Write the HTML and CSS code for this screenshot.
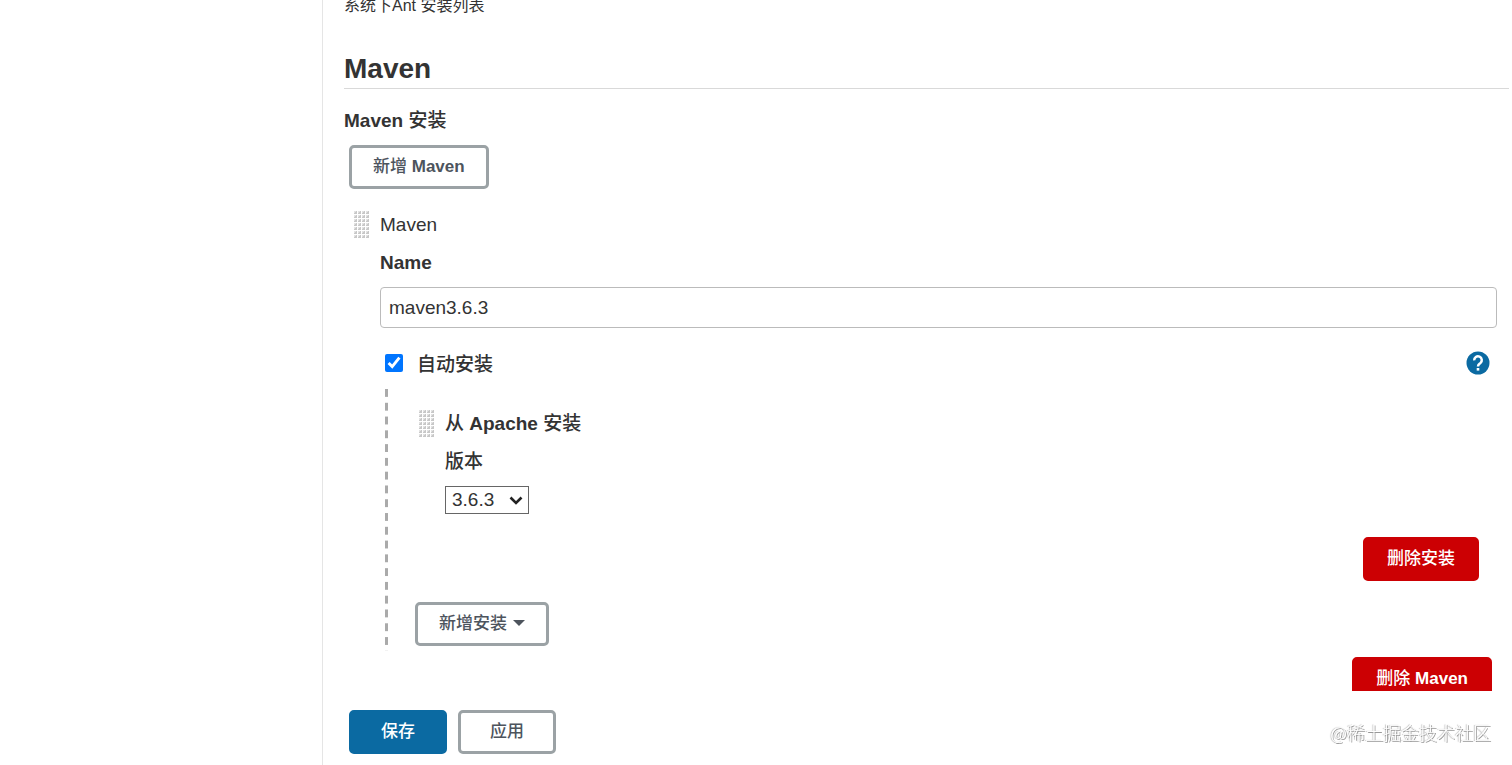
FILE: index.html
```html
<!DOCTYPE html>
<html lang="zh-CN">
<head>
<meta charset="UTF-8">
<title>Maven</title>
<link rel="stylesheet" href="styles.css">
</head>
<body>
<aside class="side-panel"></aside>
<main class="main-panel">
  <form class="config">
    <div class="config-body">
      <p class="description">系统下Ant 安装列表</p>
      <h2 class="section-title">Maven</h2>
      <div class="label">Maven <span class="zh">安装</span></div>
      <div class="button-row">
        <button type="button" class="btn"><span class="zh">新增</span> Maven</button>
      </div>

      <div class="item">
        <div class="handle">
          <svg class="grip" width="16" height="28"><defs><pattern id="dots" width="4" height="4" patternUnits="userSpaceOnUse"><rect width="3" height="3" fill="#e2e2e2"/><path d="M0 2h1V1h1V0h1v3H0z" fill="#c8c8c8"/></pattern></defs><rect width="16" height="28" fill="url(#dots)"/></svg>
        </div>
        <div class="item-body">
          <div class="item-name">Maven</div>
          <label class="label" for="name">Name</label>
          <input type="text" id="name" class="text-input" value="maven3.6.3">
          <div class="check-row">
            <input type="checkbox" id="auto" class="checkbox" checked>
            <label class="check-label zh" for="auto">自动安装</label>
            <a href="#" class="help" aria-label="Help">
              <svg width="24" height="24" viewBox="0 0 24 24"><circle cx="12" cy="12" r="11.5" fill="#0b6aa2"/><path d="M8.200 9.400a3.800 3.800 0 1 1 6.200 2.700c-1.400 1.100-2.400 1.500-2.400 3.300" fill="none" stroke="#fff" stroke-width="2.500"/><rect x="10.700" y="17" width="2.600" height="2.600" fill="#fff"/></svg>
            </a>
          </div>

          <div class="installers">
            <div class="item installer">
              <div class="handle">
                <svg class="grip" width="16" height="28"><rect width="16" height="28" fill="url(#dots)"/></svg>
              </div>
              <div class="item-body">
                <div class="item-name bold"><span class="zh">从</span> Apache <span class="zh">安装</span></div>
                <label class="label zh" for="version">版本</label>
                <div class="select">
                  <select id="version"><option>3.6.3</option></select>
                  <svg class="arrow" width="14" height="9" viewBox="0 0 14 9"><path d="M1.500 1.500 7 7l5.500-5.500" fill="none" stroke="#222" stroke-width="2.600"/></svg>
                </div>
              </div>
            </div>
            <div class="button-row end">
              <button type="button" class="btn danger"><span class="zh">删除安装</span></button>
            </div>
            <div class="add-installer">
              <button type="button" class="btn"><span class="zh">新增安装</span><span class="caret"></span></button>
            </div>
          </div>
          <div class="button-row end">
            <button type="button" class="btn danger"><span class="zh">删除</span> Maven</button>
          </div>
        </div>
      </div>
    </div>

    <div class="bottom-bar">
      <button type="submit" class="btn primary"><span class="zh">保存</span></button>
      <button type="button" class="btn"><span class="zh">应用</span></button>
    </div>
  </form>
</main>
<div class="watermark">@稀土掘金技术社区</div>
</body>
</html>
```
FILE: styles.css
```css
:root {
  --text: #333;
  --border: #bbb;
  --btn-border: #9ba2a5;
  --btn-text: #4d545d;
  --primary: #0b6aa2;
  --danger: #cc0003;
}

* {
  box-sizing: border-box;
  margin: 0;
  padding: 0;
}

body {
  display: flex;
  height: 100vh;
  overflow: hidden;
  font-family: "Liberation Sans", "Noto Sans CJK SC", sans-serif;
  font-size: 19px;
  line-height: 24px;
  color: var(--text);
  background: #fff;
}

.side-panel {
  flex: 0 0 323px;
  border-right: 1px solid #e5e5e5;
}

.main-panel {
  flex: 1;
  min-width: 0;
}

.config {
  display: flex;
  flex-direction: column;
  height: 100%;
}

.config-body {
  flex: 1;
  min-height: 0;
  overflow: hidden;
  padding: 0 3px 0 21px;
}

/* CJK runs use the medium cut next to bold latin text */
.zh {
  font-weight: 500;
}

.description {
  margin-top: -4px;
  font-size: 16px;
  line-height: 20px;
}

.section-title {
  margin: 35px 0 20px;
  padding-bottom: 1px;
  font-size: 28px;
  line-height: 36px;
  border-bottom: 1px solid #d9d9d9;
}

.label {
  display: block;
  font-weight: 700;
}

.label.zh {
  font-weight: 500;
}

.button-row {
  padding: 12px 5px 0;
}

.button-row.end {
  display: flex;
  justify-content: flex-end;
  padding: 6px 5px 0;
}

.btn {
  height: 44px;
  padding: 0 21px;
  border: 3px solid var(--btn-border);
  border-radius: 5px;
  background: #fff;
  color: var(--btn-text);
  font-family: inherit;
  font-size: 17px;
  font-weight: 700;
  line-height: 24px;
  cursor: pointer;
}

.btn.danger {
  border-color: var(--danger);
  background: var(--danger);
  color: #fff;
}

.btn.primary {
  border-color: var(--primary);
  background: var(--primary);
  color: #fff;
}

.caret {
  display: inline-block;
  margin-left: 6px;
  vertical-align: 3px;
  border: 6px solid transparent;
  border-top-color: currentColor;
  border-bottom: 0;
}

.item {
  display: flex;
  margin-top: 24px;
  padding-right: 12px;
}

.handle {
  flex: 0 0 36px;
  padding-left: 10px;
}

.grip {
  display: block;
  margin-top: -2px;
}

.item-body {
  flex: 1;
  min-width: 0;
}

.item-name {
  margin-bottom: 14px;
}

.item-name.bold {
  font-weight: 700;
}

.text-input {
  display: block;
  width: 100%;
  height: 41px;
  margin-top: 12px;
  padding: 0 8px;
  border: 1px solid var(--border);
  border-radius: 4px;
  font: inherit;
  color: inherit;
}

.check-row {
  display: flex;
  align-items: center;
  margin-top: 21px;
  padding: 0 7px 0 5px;
}

.checkbox {
  width: 18px;
  height: 18px;
  margin-right: 14px;
}

.check-label {
  padding-top: 4px;
}

.help {
  margin-left: auto;
  height: 24px;
}

.installers {
  margin: 12px 18px 0 5px;
  padding: 23px 0 5px 24px;
  background: linear-gradient(#aaa 58%, transparent 58%) 0 0 / 3px 14px;
  background-repeat: no-repeat round;
}

.installer {
  margin-top: 0;
}

.select {
  position: relative;
  width: 84px;
  margin-top: 12px;
}

.select select {
  display: block;
  width: 100%;
  height: 28px;
  padding: 0 6px;
  appearance: none;
  border: 1px solid #666;
  border-radius: 0;
  background: #fff;
  font: inherit;
  color: inherit;
}

.arrow {
  position: absolute;
  top: 10px;
  right: 6px;
  pointer-events: none;
}

.installers .button-row {
  padding: 23px 0 0;
}

.add-installer {
  margin: 21px 0 0 6px;
}

.bottom-bar {
  display: flex;
  gap: 11px;
  padding: 19px 26px 11px;
}

.bottom-bar .btn {
  padding: 0 29px;
}

.watermark {
  position: fixed;
  right: 21px;
  bottom: 21px;
  font-family: "Noto Sans CJK SC", sans-serif;
  font-size: 18px;
  font-weight: 300;
  color: #fff;
  text-shadow: 1px 1px 0 #999, -1px 0 1px #bbb;
}
```
